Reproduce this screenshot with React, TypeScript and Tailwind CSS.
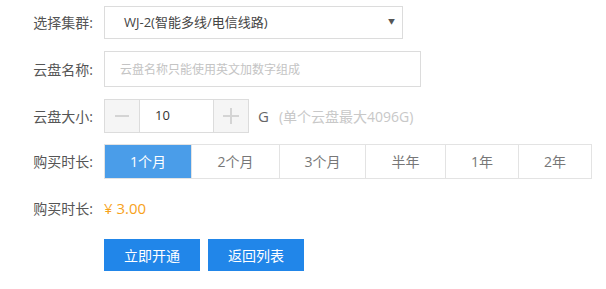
import React, { useState } from 'react';

const durations = [
  { label: '1个月', w: 'w-[86px]' },
  { label: '2个月', w: 'w-[88px]' },
  { label: '3个月', w: 'w-[86px]' },
  { label: '半年', w: 'w-[80px]' },
  { label: '1年', w: 'w-[73px]' },
  { label: '2年', w: 'w-[73px]' },
];

const font = { fontFamily: '"Open Sans", "Noto Sans CJK SC", sans-serif' };

function Label({ children }: { children: React.ReactNode }) {
  return <div className="w-[94px] shrink-0 text-right text-[14px] text-[#555] pr-[1px]">{children}</div>;
}

export default function App() {
  const [active, setActive] = useState(0);
  const [size, setSize] = useState(10);

  return (
    <div className="w-[606px] h-[289px] bg-white pt-[6px]" style={font}>
      {/* cluster */}
      <div className="flex items-center">
        <Label>选择集群:</Label>
        <div className="ml-[10px] w-[299px] h-[33px] border border-[#dcdcdc] flex items-center justify-between pl-[19px] pr-[7px]">
          <span className="text-[13px] text-[#444]">WJ-2(智能多线/电信线路)</span>
          <span className="text-[7px] text-[#555]">▼</span>
        </div>
      </div>

      {/* name */}
      <div className="flex items-center mt-[12px]">
        <Label>云盘名称:</Label>
        <input
          className="ml-[10px] w-[317px] h-[36px] border border-[#dcdcdc] px-[15px] text-[12px] outline-none placeholder:text-[#c4c4c4]"
          placeholder="云盘名称只能使用英文加数字组成"
        />
      </div>

      {/* size */}
      <div className="flex items-center mt-[12px]">
        <Label>云盘大小:</Label>
        <div className="ml-[10px] flex h-[34px] border border-[#dcdcdc]">
          <button
            className="w-[34px] bg-[#f5f5f5] flex items-center justify-center"
            onClick={() => setSize(Math.max(1, size - 1))}
          >
            <span className="block w-[14px] h-[2px] bg-[#d4d4d4]" />
          </button>
          <div className="w-[75px] border-x border-[#dcdcdc] flex items-center pl-[15px] text-[13px] text-[#333]">
            {size}
          </div>
          <button
            className="w-[34px] bg-[#f5f5f5] flex items-center justify-center relative"
            onClick={() => setSize(size + 1)}
          >
            <span className="block w-[16px] h-[2px] bg-[#d4d4d4]" />
            <span className="absolute w-[2px] h-[16px] bg-[#d4d4d4]" />
          </button>
        </div>
        <span className="ml-[9px] text-[15px] text-[#666]">G</span>
        <span className="ml-[10px] text-[14px] text-[#c8c8c8]">(单个云盘最大4096G)</span>
      </div>

      {/* duration */}
      <div className="flex items-center mt-[11px]">
        <Label>购买时长:</Label>
        <div className="ml-[10px] flex h-[35px] border border-[#e3e3e3]">
          {durations.map((d, i) => (
            <button
              key={d.label}
              onClick={() => setActive(i)}
              className={
                (i === active ? 'bg-[#4a9de9] text-white ' : 'bg-white text-[#777] ') +
                (i > 0 ? 'border-l border-[#e3e3e3] ' : '') +
                d.w +
                ' h-full text-[14px]'
              }
            >
              {d.label}
            </button>
          ))}
        </div>
      </div>

      {/* price */}
      <div className="flex items-center mt-[19px] h-[20px]">
        <Label>购买时长:</Label>
        <span className="ml-[10px] text-[15px] text-[#f7a21b]">¥ 3.00</span>
      </div>

      {/* actions */}
      <div className="flex mt-[21px] pl-[104px] gap-[8px]">
        <button className="w-[96px] h-[32px] bg-[#2186e9] text-white text-[14px]">立即开通</button>
        <button className="w-[96px] h-[32px] bg-[#2186e9] text-white text-[14px]">返回列表</button>
      </div>
    </div>
  );
}
